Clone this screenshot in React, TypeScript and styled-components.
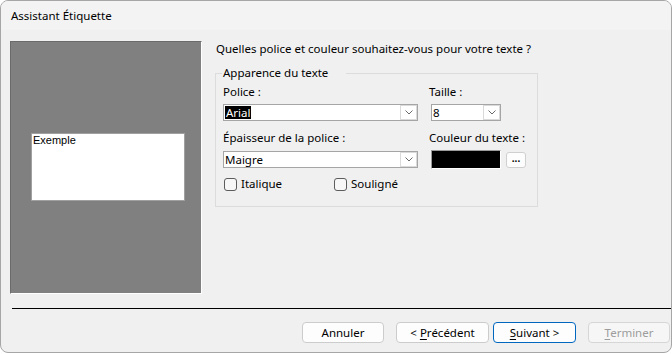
import React from 'react';
import styled, { createGlobalStyle } from 'styled-components';

const UI = `"Noto Sans", "Segoe UI", sans-serif`;

const Global = createGlobalStyle`
  html, body { margin: 0; padding: 0; background: #ffffff; }
  #root { width: 672px; height: 354px; }
`;

const Window = styled.div`
  box-sizing: border-box;
  width: 672px;
  height: 353px;
  border: 1px solid #a6a6a6;
  border-radius: 8px;
  overflow: hidden;
  background: #f0f0f0;
  display: flex;
  flex-direction: column;
  font-family: ${UI};
  font-size: 11.5px;
  color: #000;
`;

const TitleBar = styled.div`
  height: 29px;
  flex: none;
  background: #f3f3f3;
  display: flex;
  align-items: center;
  padding-left: 10px;
  line-height: 16px;
`;

const Body = styled.div`
  display: flex;
  gap: 13px;
  padding: 11px 0 0 9px;
`;

const Preview = styled.div`
  box-sizing: border-box;
  width: 192px;
  height: 253px;
  flex: none;
  background: #808080;
  border-top: 1px solid #6b6b6b;
  border-left: 1px solid #6b6b6b;
  border-right: 1px solid #ffffff;
  border-bottom: 1px solid #ffffff;
  display: flex;
  align-items: center;
  padding-left: 20px;
`;

const Sample = styled.div`
  box-sizing: border-box;
  width: 154px;
  height: 68px;
  margin-top: -2px;
  background: #ffffff;
  border: 1px solid #a0a0a0;
  padding: 0 1px;
  font-family: "Liberation Sans", Arial, sans-serif;
  font-size: 11px;
  line-height: 13px;
  color: #000;
`;

const Main = styled.div`
  display: flex;
  flex-direction: column;
  width: 323px;
`;

const Question = styled.div`
  line-height: 16px;
  padding-left: 1px;
`;

const Group = styled.div`
  position: relative;
  box-sizing: border-box;
  margin-top: 16px;
  border: 1px solid #dcdcdc;
  padding: 10px 0 14px 7px;
`;

const Legend = styled.div`
  position: absolute;
  top: -9px;
  left: 6px;
  width: 124px;
  box-sizing: border-box;
  padding-left: 1px;
  line-height: 16px;
  background: #f0f0f0;
`;

const FieldGrid = styled.div`
  display: grid;
  grid-template-columns: 206px auto;
  row-gap: 9px;
`;

const Field = styled.div`
  display: flex;
  flex-direction: column;
  gap: 4px;
`;

const Label = styled.div`
  line-height: 16px;
`;

const Controls = styled.div<{ $indent?: number; $h: number }>`
  display: flex;
  align-items: center;
  height: ${p => p.$h}px;
  margin-left: ${p => p.$indent ?? 0}px;
`;

const Combo = styled.div<{ $w: number }>`
  box-sizing: border-box;
  width: ${p => p.$w}px;
  height: 17px;
  background: #ffffff;
  border: 1px solid #a5a5a5;
  display: flex;
  align-items: stretch;
`;

const ComboText = styled.div`
  flex: 1;
  display: flex;
  align-items: center;
  padding-left: 1px;
  line-height: 13px;
`;

const Selected = styled.span`
  background: #000000;
  color: #ffffff;
  padding: 0 1px;
`;

const DropButton = styled.div`
  box-sizing: border-box;
  width: 17px;
  border: 1px solid #dadada;
  display: flex;
  align-items: center;
  justify-content: center;
  background: #ffffff;
`;

const Swatch = styled.div`
  box-sizing: border-box;
  width: 70px;
  height: 19px;
  background: #000000;
  border-top: 1px solid #9a9a9a;
  border-left: 1px solid #9a9a9a;
  border-right: 1px solid #ffffff;
  border-bottom: 1px solid #ffffff;
`;

const EllipsisButton = styled.div`
  box-sizing: border-box;
  width: 20px;
  height: 16px;
  margin-left: 5px;
  border: 1px solid #cfcfcf;
  border-radius: 3px;
  background: #fdfdfd;
  display: flex;
  align-items: center;
  justify-content: center;
  font-weight: 700;
  font-size: 10px;
  line-height: 10px;
  padding-bottom: 3px;
`;

const CheckRow = styled.div`
  display: flex;
  margin-top: 7px;
  padding-left: 1px;
`;

const CheckItem = styled.label`
  width: 110px;
  display: flex;
  align-items: center;
  line-height: 16px;
`;

const Box = styled.span`
  box-sizing: border-box;
  width: 13px;
  height: 13px;
  border: 1px solid #5c5c5c;
  border-radius: 3px;
  background: #f7f7f7;
  margin-right: 4px;
  flex: none;
`;

const Separator = styled.div`
  height: 1px;
  background: #000;
  margin: 14px 0 0 11px;
`;

const Footer = styled.div`
  display: flex;
  justify-content: flex-end;
  margin-top: 13px;
  padding-right: 1px;
`;

const Button = styled.div<{ $w: number; $gap: number; $primary?: boolean; $disabled?: boolean }>`
  box-sizing: border-box;
  flex: none;
  width: ${p => p.$w}px;
  height: 21px;
  margin-left: ${p => p.$gap}px;
  border: 1px solid ${p => (p.$primary ? '#0067c0' : p.$disabled ? '#d6d6d6' : '#cccccc')};
  border-radius: 4px;
  background: ${p => (p.$disabled ? '#f6f6f6' : '#fdfdfd')};
  color: ${p => (p.$disabled ? '#9d9d9d' : '#000')};
  display: flex;
  align-items: center;
  justify-content: center;
  line-height: 16px;
  white-space: pre;
  u { text-underline-offset: 2px; }
`;

const Chevron = () => (
  <svg width="8" height="5" viewBox="0 0 8 5">
    <polyline points="0.5,0.5 4,4 7.5,0.5" fill="none" stroke="#6a6a6a" strokeWidth="1" />
  </svg>
);

export default function App() {
  return (
    <>
      <Global />
      <Window>
        <TitleBar>Assistant Étiquette</TitleBar>
        <Body>
          <Preview>
            <Sample>Exemple</Sample>
          </Preview>
          <Main>
            <Question>Quelles police et couleur souhaitez-vous pour votre texte ?</Question>
            <Group>
              <Legend>Apparence du texte</Legend>
              <FieldGrid>
                <Field>
                  <Label>Police :</Label>
                  <Controls $h={17}>
                    <Combo $w={195}>
                      <ComboText><Selected>Arial</Selected></ComboText>
                      <DropButton><Chevron /></DropButton>
                    </Combo>
                  </Controls>
                </Field>
                <Field>
                  <Label>Taille :</Label>
                  <Controls $h={17} $indent={2}>
                    <Combo $w={70}>
                      <ComboText>8</ComboText>
                      <DropButton><Chevron /></DropButton>
                    </Combo>
                  </Controls>
                </Field>
                <Field>
                  <Label>Épaisseur de la police :</Label>
                  <Controls $h={19}>
                    <Combo $w={195}>
                      <ComboText>Maigre</ComboText>
                      <DropButton><Chevron /></DropButton>
                    </Combo>
                  </Controls>
                </Field>
                <Field>
                  <Label>Couleur du texte :</Label>
                  <Controls $h={19} $indent={2}>
                    <Swatch />
                    <EllipsisButton>...</EllipsisButton>
                  </Controls>
                </Field>
              </FieldGrid>
              <CheckRow>
                <CheckItem><Box />Italique</CheckItem>
                <CheckItem><Box />Souligné</CheckItem>
              </CheckRow>
            </Group>
          </Main>
        </Body>
        <Separator />
        <Footer>
          <Button $w={82} $gap={0}><span>Annuler</span></Button>
          <Button $w={93} $gap={12}><span>{'< '}<u>P</u>récédent</span></Button>
          <Button $w={83} $gap={4} $primary><span><u>S</u>{'uivant >'}</span></Button>
          <Button $w={82} $gap={12} $disabled><span><u>T</u>erminer</span></Button>
        </Footer>
      </Window>
    </>
  );
}
